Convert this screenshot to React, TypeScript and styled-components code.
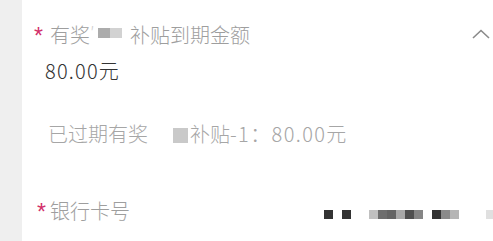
import styled, { createGlobalStyle } from "styled-components";

const GlobalStyle = createGlobalStyle`
  html, body {
    margin: 0;
    padding: 0;
    background: #ffffff;
  }
  body {
    font-family: "Noto Sans CJK SC", "Noto Sans", sans-serif;
  }
`;

const cardCells: (string | null)[] = [
  "#333333", null, "#333333", null, null,
  "#c0c0c0", "#6e6e6e", "#646464", "#a8a8a8", "#505050", "#858585", null,
  "#333333", "#8a8a8a", "#b5b5b5", null, null, null, "#e0e0e0",
];

const App = () => {
  return (
    <>
      <GlobalStyle />
      <Page>
        <Strip />
        <Content>
          <Header>
            <Label>
              <Star>*</Star>
              有奖
              <Censor width="40px">
                <Tick>′</Tick>
                <Cell size="12px" bg="#acacac" />
                <Cell size="12px" bg="#d2d2d2" />
              </Censor>
              补贴到期金额
            </Label>
            <Chevron viewBox="0 0 18 10" width="18" height="10">
              <polyline points="1,9 9,1.5 17,9" fill="none" stroke="#8a8a8a" strokeWidth="1.6" />
            </Chevron>
          </Header>
          <Amount>80.00元</Amount>
          <Expired>
            已过期有奖
            <Censor width="42px" justify="flex-end">
              <Cell size="15px" bg="#c9c9c9" tall />
            </Censor>
            补贴<Num>-1：80.00元</Num>
          </Expired>
          <CardRow>
            <Label>
              <Star shift="3px">*</Star>
              银行卡号
            </Label>
            <Mosaic>
              {cardCells.map((c, i) => (
                <Block key={i} bg={c ?? "transparent"} />
              ))}
            </Mosaic>
          </CardRow>
        </Content>
      </Page>
    </>
  );
};

export default App;

const Page = styled.div`
  display: flex;
  width: 493px;
  height: 241px;
  overflow: hidden;
`;

const Strip = styled.div`
  width: 22px;
  flex-shrink: 0;
  background-color: #efefef;
`;

const Content = styled.div`
  flex: 1;
  display: flex;
  flex-direction: column;
  padding-top: 24px;
  background: #ffffff;
`;

const Header = styled.div`
  display: flex;
  justify-content: space-between;
  align-items: center;
  height: 22px;
  padding-right: 3px;
`;

const Label = styled.div`
  display: flex;
  align-items: center;
  font-size: 20px;
  line-height: 22px;
  color: #9e9e9e;
  font-weight: 300;
  white-space: nowrap;
`;

const Star = styled.span<{ shift?: string }>`
  width: ${(p) => (p.shift ? "13px" : "16px")};
  margin-left: ${(p) => (p.shift ? `calc(12px + ${p.shift})` : "12px")};
  font-size: 23px;
  line-height: 1;
  color: #d2306a;
  align-self: flex-start;
  margin-top: 3px;
  font-family: "Liberation Sans", sans-serif;
`;

const Censor = styled.span<{ width: string; justify?: string }>`
  display: inline-flex;
  align-items: center;
  justify-content: ${(p) => p.justify ?? "flex-start"};
  width: ${(p) => p.width};
  height: 22px;
  padding-right: 2px;
  box-sizing: border-box;
`;

const Tick = styled.span`
  width: 8px;
  font-size: 18px;
  color: #cfcfcf;
  margin-top: -6px;
`;

const Cell = styled.span<{ size: string; bg: string; tall?: boolean }>`
  display: inline-block;
  width: ${(p) => p.size};
  height: ${(p) => (p.tall ? "15px" : "10px")};
  background-color: ${(p) => p.bg};
  margin-top: ${(p) => (p.tall ? "2px" : "-4px")};
`;

const Chevron = styled.svg`
  display: block;
  margin-top: -2px;
`;

const Amount = styled.div`
  margin-top: 14px;
  padding-left: 23px;
  font-size: 20px;
  line-height: 22px;
  font-weight: 300;
  letter-spacing: 1.2px;
  color: #333333;
`;

const Expired = styled.div`
  display: flex;
  align-items: center;
  margin-top: 41px;
  padding-left: 26px;
  font-size: 20px;
  line-height: 22px;
  font-weight: 300;
  color: #a6a6a6;
  white-space: nowrap;
`;

const Num = styled.span`
  letter-spacing: 1.4px;
`;

const CardRow = styled.div`
  display: flex;
  justify-content: space-between;
  align-items: center;
  margin-top: 55px;
  height: 22px;
  margin-right: -2px;
`;

const Mosaic = styled.div`
  display: flex;
  margin-top: 6px;
`;

const Block = styled.span<{ bg: string }>`
  width: 9px;
  height: 9px;
  background-color: ${(p) => p.bg};
`;
